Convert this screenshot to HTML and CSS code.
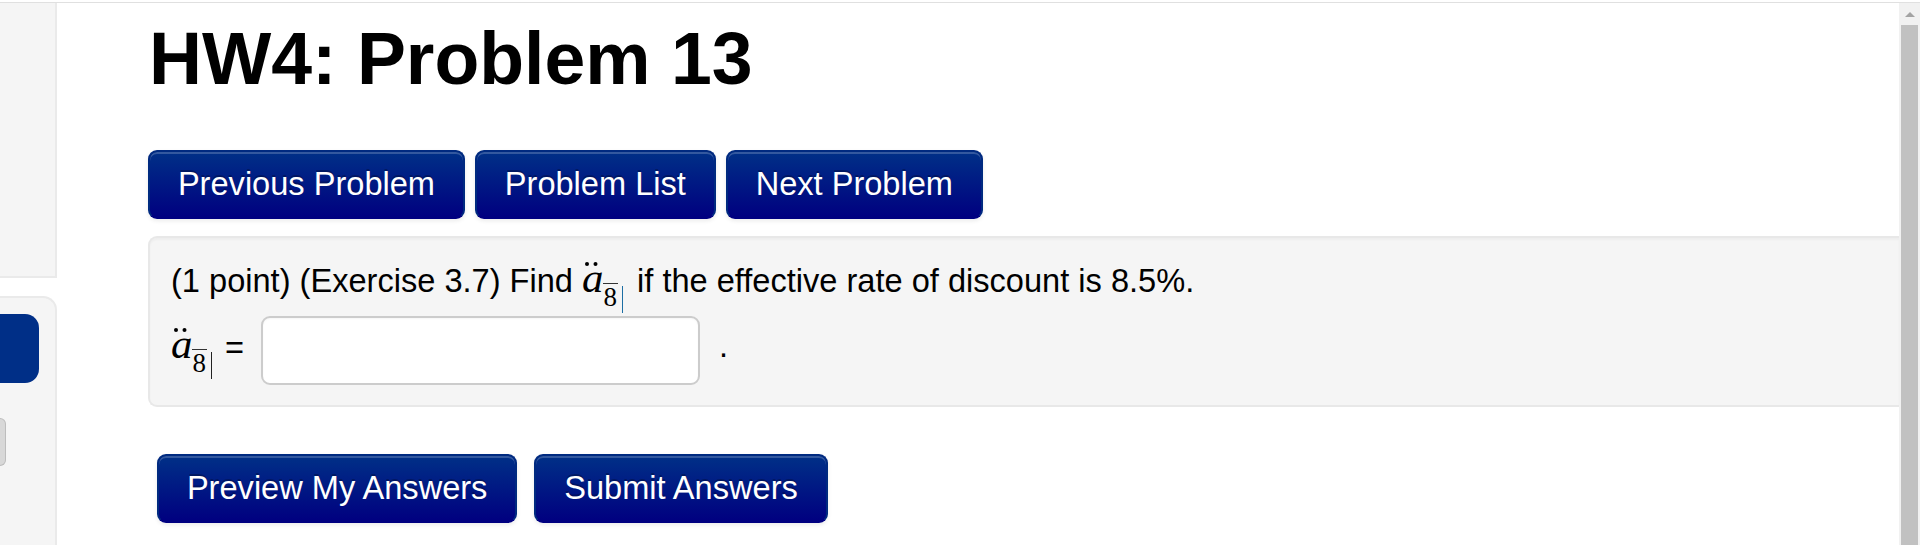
FILE: index.html
```html
<!DOCTYPE html>
<html lang="en">
  <head>
    <meta charset="UTF-8" />
    <meta name="viewport" content="width=device-width, initial-scale=1.0" />
    <link rel="stylesheet" href="styles.css">
    <title>HW4: Problem 13</title>
  </head>
  <body>
    <div class="page">
      <div class="sidebar">
        <div class="well well-top"></div>
        <div class="well well-nav">
          <div class="nav-active"></div>
          <div class="nav-button"></div>
        </div>
      </div>
      <div class="content">
        <h1>HW4: Problem 13</h1>
        <div class="nav-buttons">
          <a class="btn">Previous Problem</a>
          <a class="btn">Problem List</a>
          <a class="btn">Next Problem</a>
        </div>
        <div class="problem">
          <p class="problem-text">
            (1 point) (Exercise 3.7) Find
            <span class="math"><i class="annuity">a</i><span class="term">8</span></span>
            if the effective rate of discount is 8.5%.
          </p>
          <div class="answer-row">
            <span class="math"><i class="annuity">a</i><span class="term">8</span></span>
            <span class="equals">=</span>
            <input class="answer" type="text" />
            <span class="period">.</span>
          </div>
        </div>
        <div class="submit-buttons">
          <a class="btn">Preview My Answers</a>
          <a class="btn">Submit Answers</a>
        </div>
      </div>
      <div class="scrollbar">
        <div class="scroll-arrow"></div>
        <div class="scroll-thumb"></div>
      </div>
    </div>
  </body>
</html>
```

FILE: styles.css
```css
* {
  box-sizing: border-box;
}
html,
body {
  margin: 0;
  height: 545px;
  overflow: hidden;
}
body {
  background-color: #fff;
  color: #000;
  font-family: "Liberation Sans", Arial, sans-serif;
  padding-top: 2px;
}
.page {
  display: flex;
  height: 543px;
  border-top: 1px solid #e0e0e0;
}

/* left column, cut off by the window */
.sidebar {
  width: 57px;
  flex-shrink: 0;
  display: flex;
  flex-direction: column;
}
.well {
  background-color: #f5f5f5;
  border: 2px solid #eaeaea;
  border-left: 0;
}
.well-top {
  height: 275px;
  border-top: 0;
  margin-bottom: 18px;
}
.well-nav {
  flex: 1;
  border-bottom: 0;
  border-radius: 0 14px 0 0;
  padding-top: 16px;
}
.nav-active {
  width: 39px;
  height: 69px;
  background-color: #002f87;
  border-radius: 0 14px 14px 0;
}
.nav-button {
  width: 6px;
  height: 48px;
  margin-top: 35px;
  background-color: #d8d8d8;
  border: 1px solid #bdbdbd;
  border-left: 0;
  border-radius: 0 7px 7px 0;
}

.content {
  flex: 1;
  min-width: 0;
  padding-left: 91px;
}
h1 {
  margin: 0 0 0 1px;
  height: 147px;
  padding-top: 12px;
  font-size: 73.4px;
  line-height: 88px;
  font-weight: bold;
}
.nav-buttons {
  display: flex;
  gap: 10px;
}
.submit-buttons {
  display: flex;
  gap: 17px;
  margin: 47px 0 0 9px;
}
.btn {
  display: block;
  height: 69px;
  padding: 0 27.9px;
  font-size: 32.6px;
  line-height: 63px;
  color: #fff;
  text-shadow: 0 -2px 0 rgba(0, 0, 0, 0.25);
  background-image: linear-gradient(to bottom, #003087, #000080);
  border: 2px solid #002a80;
  border-bottom-color: #000080;
  border-radius: 9px;
  box-shadow: inset 0 2px 0 rgba(255, 255, 255, 0.2), 0 2px 4px rgba(0, 0, 0, 0.08);
  white-space: nowrap;
}

.problem {
  height: 171px;
  margin-top: 17px;
  padding: 18px 21px;
  background-color: #f5f5f5;
  border: 2px solid #e8e8e8;
  border-right: 0;
  border-radius: 9px 0 0 9px;
  box-shadow: inset 0 2px 2px rgba(0, 0, 0, 0.03);
  font-size: 32.6px;
}
.problem-text {
  margin: 0;
  height: 60px;
  line-height: 44px;
  white-space: nowrap;
}
.problem-text .math {
  margin-right: 5px;
}
.problem-text .term::after {
  background-color: #1c6ea4;
}
.answer-row {
  display: flex;
  align-items: flex-start;
}
.answer-row .math {
  margin-top: 6px;
}
.equals {
  margin-left: 13px;
  line-height: 63px;
}
.answer {
  display: block;
  width: 439px;
  height: 69px;
  margin-left: 17px;
  background-color: #fff;
  border: 2px solid #ccc;
  border-radius: 9px;
  box-shadow: inset 0 1px 2px rgba(0, 0, 0, 0.04);
}
.period {
  margin-left: 19px;
  line-height: 60px;
}

/* a with its two dots, then the angle over the 8 */
.math {
  display: inline-block;
  font-family: "Liberation Serif", "Times New Roman", serif;
  font-size: 43px;
  line-height: 44px;
  white-space: nowrap;
}
.annuity {
  position: relative;
  font-style: italic;
}
.annuity::before {
  content: "";
  position: absolute;
  left: 3px;
  top: 8px;
  width: 4px;
  height: 4px;
  border-radius: 50%;
  background-color: #000;
  box-shadow: 8.5px 0 0 #000;
}
.term {
  position: relative;
  display: inline-block;
  padding-right: 6px;
  font-size: 27px;
  line-height: 26px;
  vertical-align: -14px;
}
.term::before {
  content: "";
  position: absolute;
  left: -1px;
  width: 15px;
  top: -1px;
  height: 1px;
  background-color: #333;
}
.term::after {
  content: "";
  position: absolute;
  left: 18px;
  top: 2px;
  width: 1px;
  height: 27px;
  background-color: #222;
}

.scrollbar {
  width: 21px;
  flex-shrink: 0;
  display: flex;
  flex-direction: column;
  align-items: center;
  background-color: #f1f1f1;
}
.scroll-arrow {
  margin-top: 9px;
  width: 0;
  height: 0;
  border-left: 5px solid transparent;
  border-right: 5px solid transparent;
  border-bottom: 5px solid #a3a3a3;
}
.scroll-thumb {
  flex: 1;
  width: 17px;
  margin-top: 8px;
  background-color: #c1c1c1;
}
```
